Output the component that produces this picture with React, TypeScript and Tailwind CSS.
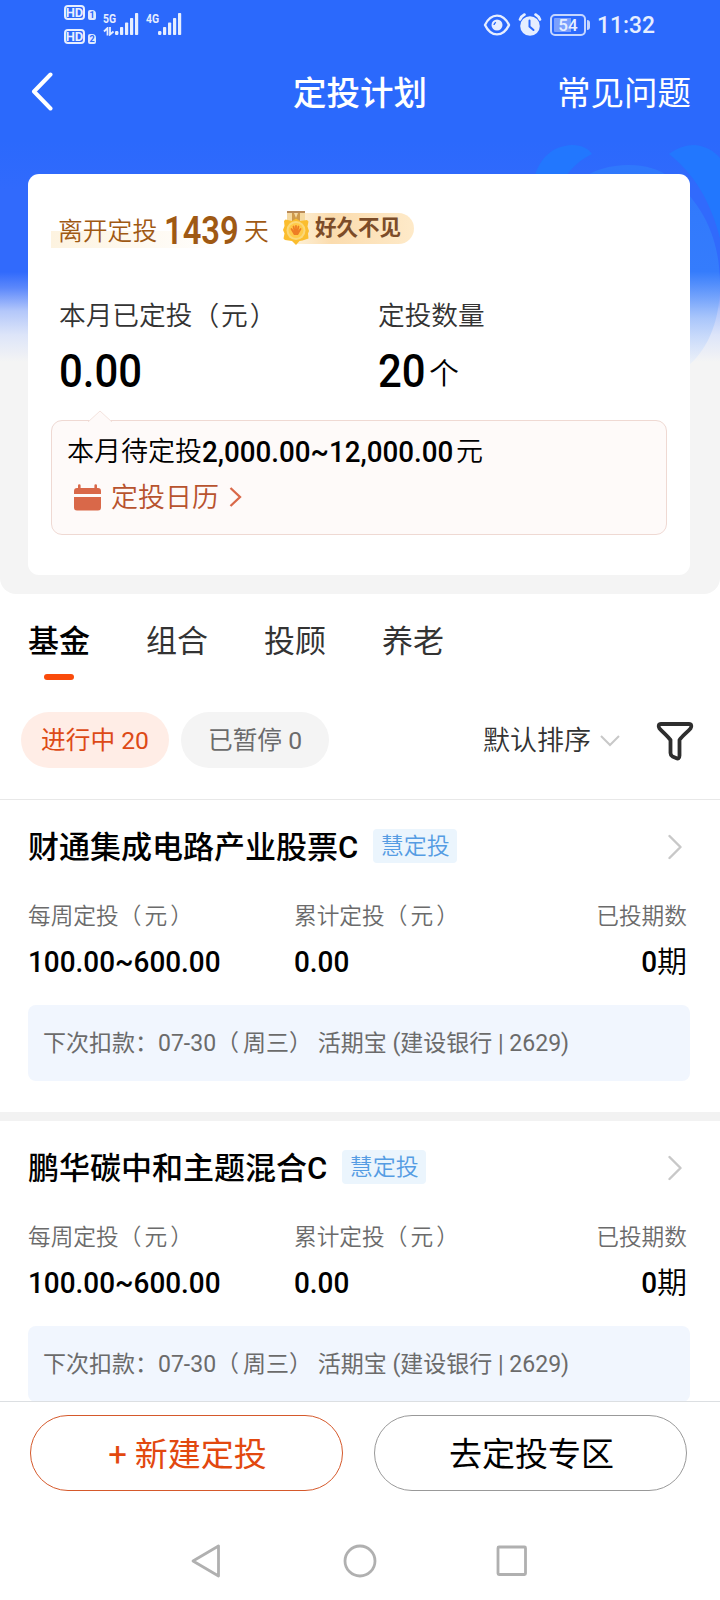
import React from "react";

const funds = [
  { name: "财通集成电路产业股票C", range: "100.00~600.00" },
  { name: "鹏华碳中和主题混合C", range: "100.00~600.00" },
];

function Signal() {
  return (
    <svg width="24" height="23" viewBox="0 0 24 23" fill="#e6eeff">
      <rect x="0" y="18" width="3.4" height="4" rx="1.2" />
      <rect x="5" y="14" width="3.2" height="8" rx="0.8" />
      <rect x="10" y="9.500" width="3.2" height="12.500" rx="0.8" />
      <rect x="15" y="5" width="3.2" height="17" rx="0.8" />
      <rect x="20" y="0" width="3.2" height="22" rx="0.8" />
    </svg>
  );
}

function HdBadge({ n }: { n: string }) {
  return (
    <div className="flex h-[15px] items-end gap-[3px]">
      <span className="flex h-[15px] w-[21px] items-center justify-center rounded-[4px] border-2 border-[#e6eeff] text-[13px] leading-none font-bold text-[#e6eeff]">
        HD
      </span>
      <span className="flex h-[10px] w-[8px] items-center justify-center rounded-[2px] rounded-tr-[4px] bg-[#dfe9ff] text-[9px] leading-none font-bold text-[#2b69fc]">
        {n}
      </span>
    </div>
  );
}

function StatusBar() {
  return (
    <div className="flex h-[50px] items-start pl-[64px] text-[#e6eeff]">
      <div className="mt-[5px] flex flex-col gap-[9px]">
        <HdBadge n="1" />
        <HdBadge n="2" />
      </div>
      <div className="mt-[13px] ml-[7px] flex">
        <div className="flex w-[12px] flex-col">
          <span className="origin-left scale-x-[.8] text-[13px] leading-[11px] font-bold">5G</span>
          <svg className="mt-[3px]" width="12" height="9" viewBox="0 0 12 9" fill="none" stroke="#e6eeff" strokeWidth="1.800">
            <path d="M4.500 8.500V1L1 4.500M7 0v7.500l3.500-3" />
          </svg>
        </div>
        <Signal />
      </div>
      <div className="mt-[13px] ml-[7px] flex">
        <span className="w-[12px] origin-left scale-x-[.8] text-[13px] leading-[11px] font-bold">4G</span>
        <Signal />
      </div>
      <div className="mt-[12px] ml-[301px] flex h-[26px] items-center">
        <svg width="28" height="22" viewBox="0 0 28 22" fill="none" stroke="#e6eeff" strokeWidth="2.400">
          <path d="M2 11C8-1.500 20-1.500 26 11 20 23.500 8 23.500 2 11Z" strokeLinejoin="round" />
          <circle cx="14" cy="11" r="5.500" fill="#e6eeff" stroke="none" />
          <path d="M11 11a3 3 0 0 1 2-2.600" stroke="#2b69fc" strokeWidth="1.400" />
        </svg>
        <svg className="ml-[7px]" width="24" height="24" viewBox="0 0 24 24">
          <circle cx="12" cy="13" r="9.800" fill="#e6eeff" />
          <path d="M2 6.500C3 4 4.500 2.500 6.500 1.500M22 6.500C21 4 19.500 2.500 17.500 1.500" stroke="#e6eeff" strokeWidth="2.600" fill="none" strokeLinecap="round" />
          <path d="M11.500 7.500v6l4 3.500" stroke="#2b69fc" strokeWidth="2" fill="none" strokeLinecap="round" />
        </svg>
        <div className="ml-[8px] flex h-[22px] w-[36px] items-center justify-center rounded-[5px] border-2 border-[#c5d6ff] bg-linear-to-r from-[#7ba0fd] from-60% to-[#2b69fc] to-60% bg-clip-content p-[2px] text-[17px] leading-none font-medium">
          54
        </div>
        <div className="ml-[1px] h-[10px] w-[3px] rounded-r bg-[#c5d6ff]" />
        <span className="mt-[2px] ml-[7px] origin-left scale-x-[.97] text-[23.500px] leading-none font-medium">11:32</span>
      </div>
    </div>
  );
}

function Chevron({ className, color, width }: { className?: string; color: string; width: number }) {
  return (
    <svg className={className} width="14" height="26" viewBox="0 0 14 26" fill="none" stroke={color} strokeWidth={width} strokeLinecap="round" strokeLinejoin="round">
      <path d="M1.500 2 12.500 13 1.500 24" />
    </svg>
  );
}

function Medal() {
  return (
    <svg width="28" height="35" viewBox="0 0 28 35">
      <path d="M5 1h18v15H5z" fill="#f5d9a0" />
      <path d="M5 0h18v2H5z" fill="#b98a58" />
      <path d="M10 2h2l2 5 2-5h2v8h-8z" fill="#cf9a4c" />
      <path d="M14 7.500l4 2.500 7-1 1.500 1.500-1 5 1.500 4.500-1 2.500.5 5-6 2-3 .500-3.500 4-4-4-7-1-1.500-1.500 1-5L1 19l1.500-4-.5-5 1.500-1.500 6.500 1.500z" fill="#fbbd2e" />
      <circle cx="14" cy="19.500" r="9.500" fill="#fbd878" />
      <circle cx="14" cy="19.500" r="7.500" fill="#ffca48" />
      <path d="M9.500 18l3 5h3l3-5M14 15v8M11.500 15.500l1.500 6M16.500 15.500l-1.500 6" stroke="#ee7d24" strokeWidth="1.800" fill="none" strokeLinecap="round" />
    </svg>
  );
}

function SummaryCard() {
  return (
    <div className="relative mx-[28px] mr-[30px] h-[401px] rounded-[11px] bg-white px-[23px] pt-[37px]">
      <div className="flex h-[40px] items-center">
        <div className="flex h-full w-[218px] items-center bg-linear-to-r from-[#fdf3e0] to-white to-80% bg-[length:100%_17px] bg-[position:0_20px] bg-no-repeat pl-[7px] text-[#9f5913]">
          <span className="mt-[2px] w-[106px] text-[24.800px] leading-none font-[350]">离开定投</span>
          <span className="w-[80px] origin-left scale-x-[.86] text-[38px] leading-none font-semibold">1439</span>
          <span className="mt-[2px] text-[24.800px] leading-none font-[350]">天</span>
        </div>
        <div className="-mt-[6px] ml-[13px] flex items-center">
          <div className="z-10 -mr-[14px] -mb-[1px]"><Medal /></div>
          <div className="flex h-[31px] w-[118px] items-center rounded-r-full bg-linear-to-r from-[#fdf0d6] via-[#fbdcae] via-30% to-[#feeac9] pl-[19px] text-[21.500px] leading-none font-bold text-[#7c4c28]">
            好久不见
          </div>
        </div>
      </div>
      <div className="flex pt-[47px] pl-[8px]">
        <div className="w-[319px]">
          <div className="h-[36px] text-[26.700px] leading-[36px] font-[350] text-[#333]">
            本月已定投<span className="tracking-[2px]">（元</span>）
          </div>
          <div className="mt-[12px] flex h-[50px] origin-left scale-x-[.91] items-center text-[46px] leading-none font-medium text-black">0.00</div>
        </div>
        <div>
          <div className="h-[36px] text-[26.700px] leading-[36px] font-[350] text-[#333]">定投数量</div>
          <div className="mt-[12px] flex h-[50px] items-center text-black">
            <span className="w-[51px] origin-left scale-x-[.91] text-[46px] leading-none font-medium">20</span>
            <span className="mt-[6px] text-[30px] leading-none font-[350]">个</span>
          </div>
        </div>
      </div>
      <div className="relative mt-[24px] h-[115px] w-[616px] rounded-[11px] border border-[#efd9d3] bg-[#fefaf9] pt-[13px] pl-[15px]">
        <svg className="absolute -top-[11px] left-[36px]" width="24" height="12" viewBox="0 0 24 12">
          <path d="M0 12 12 1 24 12" fill="#fefaf9" stroke="#f3e2dd" />
        </svg>
        <div className="flex h-[36px] items-center text-[27px] leading-none text-black">
          <span className="font-[350]">本月待定投</span>
          <span className="flex w-[254px] text-[30px] font-medium">
            <span className="w-[254px] origin-left scale-x-[.925] whitespace-nowrap">2,000.00~12,000.00</span>
          </span>
          <span className="font-[350]">元</span>
        </div>
        <div className="mt-[10px] flex h-[36px] items-center text-[27px] leading-none text-[#b8532e]">
          <svg className="-mt-[2px] ml-[7px]" width="27" height="27" viewBox="0 0 27 27" fill="#d96849">
            <path d="M0 10V7a3 3 0 0 1 3-3h1V1.500a1.300 1.300 0 0 1 2.600 0V4h13.800V1.500a1.300 1.300 0 0 1 2.600 0V4h1a3 3 0 0 1 3 3v3zM0 13h27v10.500a3 3 0 0 1-3 3H3a3 3 0 0 1-3-3z" />
          </svg>
          <span className="ml-[10px] font-[350]">定投日历</span>
          <svg className="-mt-[2px] ml-[10px]" width="13" height="20" viewBox="0 0 13 20" fill="none" stroke="#d96849" strokeWidth="2.300">
            <path d="M1.500 1 11 10 1.500 19" />
          </svg>
        </div>
      </div>
    </div>
  );
}

function FundItem({ name, range }: { name: string; range: string }) {
  return (
    <div className="h-[312px] px-[28px] pt-[26px] pr-[30px]">
      <div className="flex h-[40px] items-center">
        <span className="mt-[2px] text-[31px] leading-none font-medium text-black">{name}</span>
        <span className="ml-[15px] flex h-[34px] w-[84px] items-center justify-center rounded-[4px] bg-[#ebf5fd] text-[23px] leading-none font-[350] text-[#559ce3]">
          慧定投
        </span>
        <Chevron className="mt-[1px] mr-[8px] ml-auto" color="#c8c8c8" width={2.4} />
      </div>
      <div className="mt-[35px] flex text-[22.700px] leading-[32px] font-[350] text-[#6b6b6b]">
        <span className="w-[266px]">每周定投<span className="tracking-[3px]">（元</span>）</span>
        <span>累计定投<span className="tracking-[3px]">（元</span>）</span>
        <span className="mr-[3px] ml-auto">已投期数</span>
      </div>
      <div className="mt-[9px] flex h-[40px] items-center text-[30px] leading-none font-medium text-black">
        <span className="w-[266px]"><span className="inline-block origin-left scale-x-[.93]">{range}</span></span>
        <span className="origin-left scale-x-[.93]">0.00</span>
        <span className="mr-[3px] ml-auto flex items-center">
          <span className="origin-right scale-x-[.93]">0</span>
          <span className="text-[30px] font-[350]">期</span>
        </span>
      </div>
      <div className="mt-[23px] flex h-[76px] items-center rounded-[8px] bg-[#f1f6fe] pt-px pl-[15px] text-[23px] leading-none whitespace-pre text-[#6b6b6b]">
        <span>下次扣款：07-30<span className="tracking-[4px]">（</span>周三） 活期宝 (建设银行 | 2629)</span>
      </div>
    </div>
  );
}

export default function App() {
  return (
    <div className="relative flex h-[1600px] w-[720px] flex-col overflow-hidden bg-white font-[Roboto,'Noto_Sans_CJK_SC',sans-serif]">
      <div className="relative h-[594px] shrink-0 overflow-hidden rounded-b-[16px] bg-[#f4f4f4]">
        <div className="absolute inset-x-0 top-0 h-[370px] bg-[linear-gradient(180deg,#2b69fc_0,#2b69fc_140px,#316afc_190px,#316afc_272px,#5c88fb_288px,#b3c7fa_311px,#dde5f9_335px,#f4f4f4_362px)]">
          <svg className="absolute top-0 right-0" width="220" height="370" viewBox="500 0 220 370">
            <defs>
              <linearGradient id="fade" x1="0" y1="165" x2="0" y2="370" gradientUnits="userSpaceOnUse">
                <stop offset="0" stopColor="#2f78fc" />
                <stop offset="0.520" stopColor="#357cfc" />
                <stop offset="0.750" stopColor="#a5c4fb" stopOpacity=".8" />
                <stop offset="1" stopColor="#eef3fb" stopOpacity=".5" />
              </linearGradient>
            </defs>
            <path d="M580 180C604 161 650 160 670 178 700 200 720 235 720 285 720 325 705 352 688 366H580Z" fill="url(#fade)" />
            <path d="M534 178C540 158 552 146 572 145 582 145 589 149 592 154 580 160 572 167 565 178Z" fill="#2277fe" />
            <path d="M669 154C677 148 686 145 694 145 706 146 714 151 720 158V238C710 200 694 174 669 154Z" fill="#2277fe" />
          </svg>
        </div>
        <div className="relative">
          <StatusBar />
          <div className="flex h-[124px] items-start pt-[23px] pr-[29px] pl-[30px] text-[33.500px] leading-[42px] text-white">
            <svg className="mt-[-2px]" width="23" height="42" viewBox="0 0 23 42" fill="none" stroke="#fff" strokeWidth="4" strokeLinecap="round" strokeLinejoin="round">
              <path d="M20.500 3.500 4 20.500 20.500 37.500" />
            </svg>
            <span className="ml-[240px] font-medium">定投计划</span>
            <span className="ml-auto">常见问题</span>
          </div>
          <SummaryCard />
        </div>
      </div>

      <div className="flex h-[100px] shrink-0 gap-[56px] pt-[27px] pl-[28px] text-[31px] leading-[42px] text-[#333]">
        <div className="flex flex-col items-center font-medium text-black">
          基金
          <div className="mt-[11px] h-[6px] w-[30px] rounded-full bg-[#fa4b0b]" />
        </div>
        <span>组合</span>
        <span>投顾</span>
        <span>养老</span>
      </div>

      <div className="flex h-[106px] shrink-0 items-start border-b border-[#e8e8e8] pt-[18px] pl-[21px] text-[24.700px] leading-none">
        <div className="flex h-[56px] w-[148px] items-center justify-center rounded-full bg-[#ffede6] pt-[2px] text-[#dd4a16]">进行中 20</div>
        <div className="ml-[12px] flex h-[56px] w-[148px] items-center justify-center rounded-full bg-[#f4f4f4] pt-[2px] text-[#6b6b6b]">已暂停 0</div>
        <div className="ml-[154px] flex h-[56px] items-center text-[27px] text-[#333]">
          <span className="mt-[2px] font-[350]">默认排序</span>
          <svg className="mt-[2px] ml-[9px]" width="20" height="12" viewBox="0 0 20 12" fill="none" stroke="#c8c8c8" strokeWidth="2">
            <path d="M1 1 10 10 19 1" />
          </svg>
          <svg className="mt-[2px] ml-[36px]" width="38" height="40" viewBox="0 0 38 40" fill="none" stroke="#2e2e2e" strokeWidth="3.800" strokeLinejoin="round">
            <path d="M5 3H33C35.500 3 36 5.500 34.500 7.500 31 11.500 26 15 23.500 19V34.500C23.500 37.500 22 38 20 37L16.500 35.500C15 34.500 14.500 33.500 14.500 32V19C11.500 15 7 11.500 3.500 7.500 2 5.500 2.500 3 5 3Z" />
          </svg>
        </div>
      </div>

      <div className="flex h-[601px] shrink-0 flex-col overflow-hidden">
        <FundItem {...funds[0]} />
        <div className="h-[9px] shrink-0 bg-[#f2f2f2]" />
        <div className="h-[280px] shrink-0"><FundItem {...funds[1]} /></div>
      </div>

      <div className="relative flex h-[90px] shrink-0 gap-[31px] border-t border-[#dcdfe2] bg-white pt-[13px] pl-[30px] text-[33px] leading-none">
        <div className="flex h-[76px] w-[313px] items-center justify-center rounded-full border border-[#d5592b] pt-[3px] pl-[2px] text-[#e2480f]">
          <span className="mr-[8px]">+</span>新建定投
        </div>
        <div className="flex h-[76px] w-[313px] items-center justify-center rounded-full border border-[#999] pt-[3px] pl-[2px] text-black">去定投专区</div>
      </div>

      <div className="flex grow items-center pt-[31px] pl-[190px]">
        <svg width="340" height="36" viewBox="0 0 340 36" fill="none" stroke="#b0b0b0" strokeWidth="2.800" strokeLinejoin="round">
          <path d="M28.500 3V33L3 18Z" />
          <circle cx="170" cy="18" r="15" />
          <rect x="308" y="4" width="27.500" height="27.500" rx="1" />
        </svg>
      </div>
    </div>
  );
}
